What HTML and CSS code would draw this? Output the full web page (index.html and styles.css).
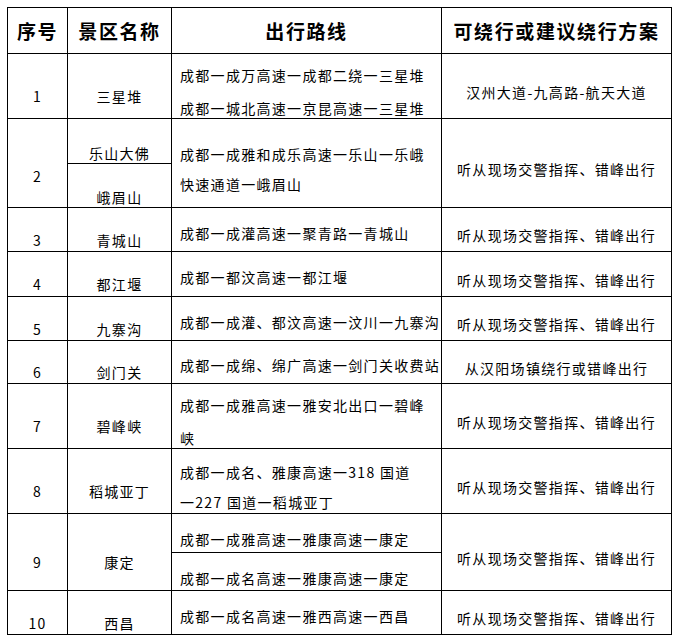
FILE: index.html
```html
<!DOCTYPE html>
<html lang="zh-CN">
<head>
<meta charset="utf-8">
<title>景区出行路线</title>
<link rel="stylesheet" href="styles.css">
</head>
<body>
<table class="routes">
  <colgroup>
    <col class="c-no"><col class="c-name"><col class="c-route"><col class="c-alt">
  </colgroup>
  <thead>
    <tr class="h46"><th>序号</th><th>景区名称</th><th>出行路线</th><th>可绕行或建议绕行方案</th></tr>
  </thead>
  <tbody>
    <tr class="h65">
      <td class="no">1</td><td class="name">三星堆</td>
      <td class="route"><div class="lines"><span>成都一成万高速一成都二绕一三星堆</span><span>成都一城北高速一京昆高速一三星堆</span></div></td>
      <td class="alt">汉州大道-九高路-航天大道</td>
    </tr>
    <tr class="h45">
      <td class="no lower" rowspan="2">2</td><td class="name sub">乐山大佛</td>
      <td class="route" rowspan="2"><div class="lines tight"><span>成都一成雅和成乐高速一乐山一乐峨</span><span>快速通道一峨眉山</span></div></td>
      <td class="alt" rowspan="2">听从现场交警指挥、错峰出行</td>
    </tr>
    <tr class="h44"><td class="name sub">峨眉山</td></tr>
    <tr class="h44">
      <td class="no">3</td><td class="name">青城山</td>
      <td class="route one">成都一成灌高速一聚青路一青城山</td>
      <td class="alt">听从现场交警指挥、错峰出行</td>
    </tr>
    <tr class="h45">
      <td class="no">4</td><td class="name">都江堰</td>
      <td class="route one">成都一都汶高速一都江堰</td>
      <td class="alt">听从现场交警指挥、错峰出行</td>
    </tr>
    <tr class="h44">
      <td class="no">5</td><td class="name">九寨沟</td>
      <td class="route one">成都一成灌、都汶高速一汶川一九寨沟</td>
      <td class="alt">听从现场交警指挥、错峰出行</td>
    </tr>
    <tr class="h43">
      <td class="no">6</td><td class="name">剑门关</td>
      <td class="route one">成都一成绵、绵广高速一剑门关收费站</td>
      <td class="alt">从汉阳场镇绕行或错峰出行</td>
    </tr>
    <tr class="h65">
      <td class="no">7</td><td class="name">碧峰峡</td>
      <td class="route"><div class="lines"><span>成都一成雅高速一雅安北出口一碧峰</span><span>峡</span></div></td>
      <td class="alt">听从现场交警指挥、错峰出行</td>
    </tr>
    <tr class="h65">
      <td class="no">8</td><td class="name">稻城亚丁</td>
      <td class="route"><div class="lines tight"><span>成都一成名、雅康高速一318 国道</span><span>一227 国道一稻城亚丁</span></div></td>
      <td class="alt">听从现场交警指挥、错峰出行</td>
    </tr>
    <tr class="h39">
      <td class="no" rowspan="2">9</td><td class="name" rowspan="2">康定</td>
      <td class="route split">成都一成雅高速一雅康高速一康定</td>
      <td class="alt" rowspan="2">听从现场交警指挥、错峰出行</td>
    </tr>
    <tr class="h38"><td class="route split">成都一成名高速一雅康高速一康定</td></tr>
    <tr class="h44">
      <td class="no">10</td><td class="name">西昌</td>
      <td class="route one">成都一成名高速一雅西高速一西昌</td>
      <td class="alt">听从现场交警指挥、错峰出行</td>
    </tr>
  </tbody>
</table>
</body>
</html>
```

FILE: styles.css
```css
html, body {
  margin: 0;
  background: #ffffff;
}
body {
  font-family: "Noto Sans CJK SC", "Noto Sans", sans-serif;
  color: #000000;
}
.routes {
  border-collapse: collapse;
  table-layout: fixed;
  width: 664px;
  margin: 7px 0 0 7px;
}
.c-no { width: 60px; }
.c-name { width: 104px; }
.c-route { width: 270px; }
.c-alt { width: 230px; }

.routes th,
.routes td {
  border: 1px solid #000000;
  padding: 0;
  vertical-align: middle;
  font-size: 14px;
  line-height: 20px;
  letter-spacing: 1.3px;
  white-space: nowrap;
  overflow: hidden;
}
.routes th {
  font-size: 19px;
  font-weight: 700;
  letter-spacing: 1.6px;
  text-align: center;
}
.h46 { height: 46px; }
.h65 { height: 65px; }
.h45 { height: 45px; }
.h44 { height: 44px; }
.h43 { height: 43px; }
.h39 { height: 39px; }
.h38 { height: 38px; }

.routes td.no,
.routes td.name {
  text-align: center;
  padding-top: 20px;
}
.routes td.no.lower { padding-top: 26px; }
.routes td.name.sub { padding-top: 23px; }

.routes td.route {
  text-align: left;
  padding-left: 8px;
  padding-top: 11px;
}
.routes td.route.one { padding-top: 6px; }
.routes td.route.split { padding-top: 12px; }

.lines {
  display: flex;
  flex-direction: column;
  gap: 13px;
}
.lines.tight { gap: 10px; }

.routes td.alt {
  text-align: center;
  padding-top: 11px;
}
```
